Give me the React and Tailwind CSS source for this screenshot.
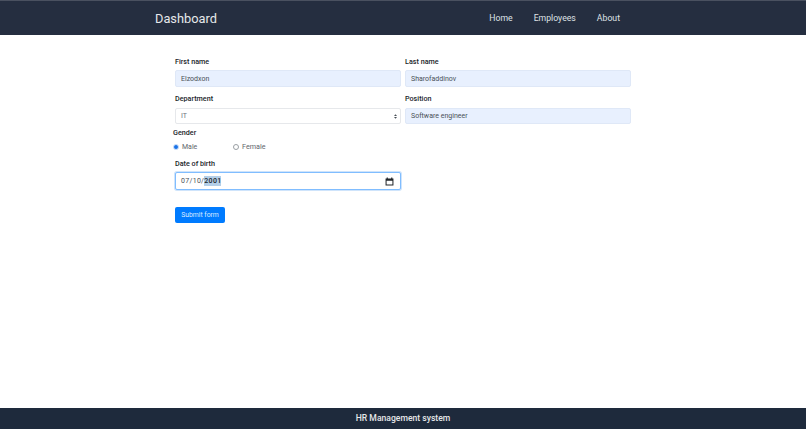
import React from 'react';

function Field({ label, value, compact }) {
  return (
    <div className="flex-1 min-w-0">
      <label className={compact ? "block h-[9px] mb-[5px] text-[7.2px] leading-[9px] font-medium text-[#212529]" : "block h-[9px] mb-[4px] text-[7.2px] leading-[9px] font-medium text-[#212529]"}>{label}</label>
      <input
        readOnly
        value={value}
        className={compact
          ? "block w-full h-[16px] px-[5px] text-[7px] text-[#495057] bg-[#e8f0fe] border border-[#dfe8f7] rounded-[2px] outline-none"
          : "block w-full h-[17px] px-[5px] text-[7px] text-[#495057] bg-[#e8f0fe] border border-[#dfe8f7] rounded-[2px] outline-none"}
      />
    </div>
  );
}

export default function App() {
  return (
    <div className="min-h-screen flex flex-col bg-white font-['Roboto',sans-serif]">
      {/* Navbar */}
      <nav className="h-[35px] bg-[#252e40] border-t border-[#4a5160] flex items-center pt-[1px] pl-[155px] pr-[186px]">
        <a className="text-[12.8px] text-[#e6e8ea]">Dashboard</a>
        <div className="ml-auto flex items-center gap-[21px] text-[8.7px] text-[#dfe2e5]">
          <a>Home</a>
          <a>Employees</a>
          <a>About</a>
        </div>
      </nav>

      {/* Form */}
      <main className="flex-1 w-[456px] mx-auto pt-[22px]">
        <div className="flex gap-[4px]">
          <Field label="First name" value="Elzodxon" />
          <Field label="Last name" value="Sharofaddinov" />
        </div>

        <div className="flex gap-[4px] mt-[7px]">
          <div className="flex-1 min-w-0">
            <label className="block h-[9px] mb-[5px] text-[7.2px] leading-[9px] font-medium text-[#212529]">Department</label>
            <div className="relative">
              <select className="block w-full h-[16px] px-[5px] text-[7px] text-[#6c757d] bg-white border border-[#e6e8eb] rounded-[2px] appearance-none outline-none">
                <option>IT</option>
              </select>
              <svg className="absolute right-[4px] top-[6px] w-[3px] h-[5px]" viewBox="0 0 4 6" fill="#495057">
                <path d="M2 0 4 2.3H0zM2 6 0 3.7h4z" />
              </svg>
            </div>
          </div>
          <Field label="Position" value="Software engineer" compact />
        </div>

        <div className="mt-[4px] -ml-[2px] text-[7.2px] leading-[9px] font-medium text-[#212529]">Gender</div>
        <div className="flex items-center h-[10px] mt-[5px] text-[7px] text-[#5f666d]">
          <span className="w-[6px] h-[6px] rounded-full bg-[#1a73e8] border border-[#cfe0f8] -ml-[2px]"></span>
          <span className="ml-[3px] w-[51px]">Male</span>
          <span className="w-[6px] h-[6px] rounded-full bg-white border border-[#9a9fa4]"></span>
          <span className="ml-[3px] text-[7.2px]">Female</span>
        </div>

        <div className="mt-[7px] h-[9px] text-[7.2px] leading-[9px] font-medium text-[#212529]">Date of birth</div>
        <div className="mt-[4px] w-[226px] h-[18px] pl-[5px] pr-[6px] flex items-center bg-white border border-[#80bdff] rounded-[2px] ring-1 ring-[#cfe4fb] text-[7px] text-[#495057] tracking-[0.3px]">
          <span>07/10/</span>
          <span className="bg-[#b4cfe8] text-[#212529] font-medium">2001</span>
          <svg className="ml-auto w-[9px] h-[9px]" viewBox="0 0 16 16" fill="#212529">
            <path d="M3 1h2v1.5h6V1h2v1.5h2V15H1V2.5h2zM2.8 6.5v6.8h10.4V6.5z" fillRule="evenodd" />
          </svg>
        </div>

        <button className="mt-[17px] block h-[16px] w-[50px] bg-[#007bff] text-[#dcebff] text-[6.8px] rounded-[2px]">Submit form</button>
      </main>

      {/* Footer */}
      <footer className="h-[21px] bg-[#1e2a3c] flex items-center justify-center text-[8.6px] font-medium text-[#e6e8ea]">
        HR Management system
      </footer>
    </div>
  );
}
